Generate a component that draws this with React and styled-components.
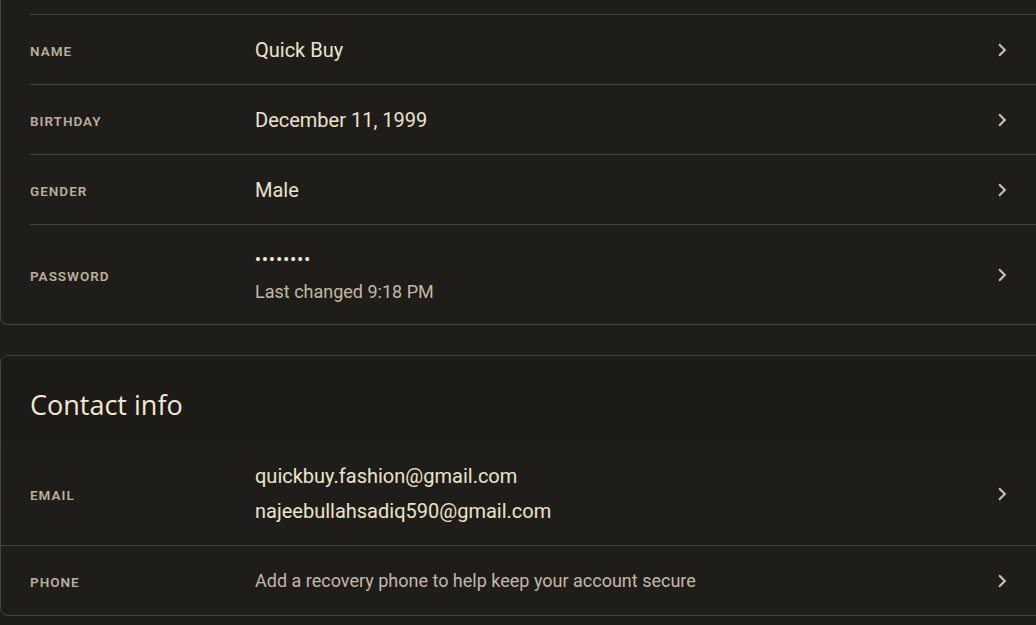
import React from "react";
import styled, { createGlobalStyle } from "styled-components";

const GlobalStyle = createGlobalStyle`
  html, body {
    margin: 0;
    padding: 0;
    background: #1f1d1a;
    overflow: hidden;
  }
  body {
    font-family: Roboto, "Liberation Sans", sans-serif;
  }
`;

const Page = styled.div`
  width: 1036px;
  height: 625px;
  overflow: hidden;
  background: #1f1d1a;
`;

const Card = styled.section`
  box-sizing: border-box;
  width: 1060px;
  background: #1f1d1a;
  border: 1px solid #48453e;
  border-radius: 8px;
  overflow: hidden;
  ${(p) =>
    p.$clippedTop
      ? `border-top: none; border-top-left-radius: 0; border-top-right-radius: 0; padding-top: 14px;`
      : `margin-top: 30px;`}
`;

const CardTitle = styled.h2`
  box-sizing: border-box;
  height: 86px;
  margin: 0;
  padding: 10px 0 0 29px;
  display: flex;
  align-items: center;
  font-family: "Open Sans", Roboto, sans-serif;
  font-weight: 400;
  font-size: 27px;
  color: #f4e8d1;
  background: #1c1b18;
`;

const Row = styled.div`
  box-sizing: border-box;
  display: grid;
  grid-template-columns: 225px 1fr 26px;
  align-items: center;
  height: ${(p) => p.$height}px;
  padding-right: 44px;
  background: ${(p) => (p.$shade ? "#1f1d1a" : "transparent")};
  ${(p) =>
    p.$inset
      ? `margin-left: 29px; border-top: 1px solid #48453e;`
      : `padding-left: 29px; ${p.$divider ? "border-top: 1px solid #48453e;" : ""}`}
`;

const Label = styled.div`
  font-size: 13.5px;
  font-weight: 600;
  letter-spacing: 1px;
  text-transform: uppercase;
  color: #bbb09c;
  padding-top: 3px;
`;

const Values = styled.div`
  display: flex;
  flex-direction: column;
  gap: ${(p) => p.$gap || 0}px;
  padding-top: ${(p) => p.$offset || 0}px;
`;

const Value = styled.div`
  font-size: 20px;
  font-weight: 400;
  color: #eee2cb;
  line-height: 24px;
`;

const Dots = styled.div`
  font-size: 16px;
  font-weight: 700;
  letter-spacing: 1.3px;
  color: #f4e8d1;
  line-height: 20px;
`;

const Secondary = styled.div`
  font-size: 18px;
  color: #c3b8a4;
  line-height: 24px;
`;

const Hint = styled.div`
  font-size: 18px;
  color: #c3b8a4;
  line-height: 24px;
`;

const ChevronBox = styled.div`
  display: flex;
  align-items: center;
  justify-content: center;
  color: #cbbfaa;
`;

const Chevron = () => (
  <ChevronBox>
    <svg width="26" height="26" viewBox="0 0 24 24" fill="currentColor">
      <path d="M10 6 8.59 7.41 13.17 12l-4.58 4.59L10 18l6-6z" />
    </svg>
  </ChevronBox>
);

export default function App() {
  return (
    <Page>
      <GlobalStyle />
      <Card $clippedTop>
        <Row $inset $height={70}>
          <Label>Name</Label>
          <Value>Quick Buy</Value>
          <Chevron />
        </Row>
        <Row $inset $height={70}>
          <Label>Birthday</Label>
          <Value>December 11, 1999</Value>
          <Chevron />
        </Row>
        <Row $inset $height={70}>
          <Label>Gender</Label>
          <Value>Male</Value>
          <Chevron />
        </Row>
        <Row $inset $height={100}>
          <Label>Password</Label>
          <Values $gap={10} $offset={4}>
            <Dots>••••••••</Dots>
            <Secondary>Last changed 9:18 PM</Secondary>
          </Values>
          <Chevron />
        </Row>
      </Card>
      <Card>
        <CardTitle>Contact info</CardTitle>
        <Row $shade $height={103}>
          <Label>Email</Label>
          <Values $gap={11}>
            <Value>quickbuy.fashion@gmail.com</Value>
            <Value>najeebullahsadiq590@gmail.com</Value>
          </Values>
          <Chevron />
        </Row>
        <Row $divider $height={70}>
          <Label>Phone</Label>
          <Hint>Add a recovery phone to help keep your account secure</Hint>
          <Chevron />
        </Row>
      </Card>
    </Page>
  );
}
